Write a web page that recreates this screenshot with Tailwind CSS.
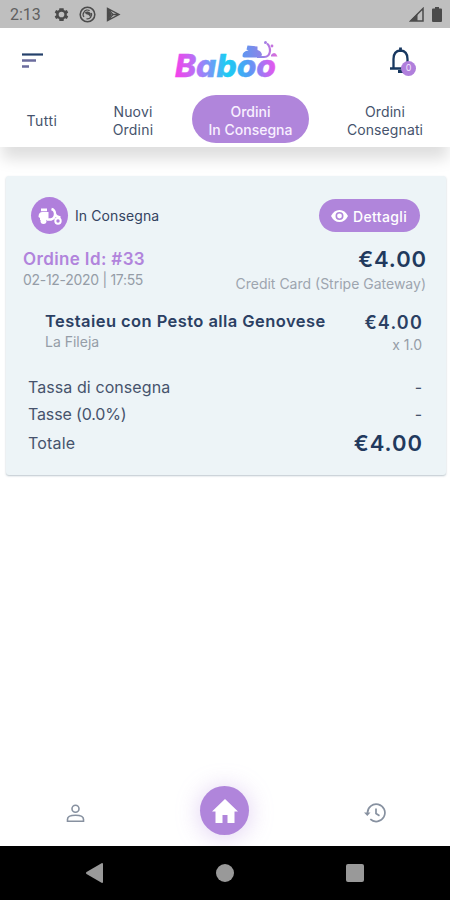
<!DOCTYPE html>
<html lang="it">
<head>
<meta charset="utf-8">
<meta name="viewport" content="width=device-width, initial-scale=1">
<title>Baboo - Ordini</title>
<script src="https://cdn.jsdelivr.net/npm/@tailwindcss/browser@4"></script>
</head>
<body class="bg-white">
<div class="w-[450px] h-[900px] overflow-hidden flex flex-col bg-white font-['Inter','Liberation_Sans',sans-serif] text-[#34435f] whitespace-nowrap">

  <!-- Status bar -->
  <div class="h-7 shrink-0 bg-[#bfbfbf] flex items-center text-[#4b4b4b] pl-[10px] pr-[8px] relative z-20">
    <span class="w-[43px] font-['Roboto',sans-serif] text-[16px] leading-none pt-px text-[#606060]">2:13</span>
    <svg class="size-[17px] mt-px" viewBox="0 0 24 24" fill="currentColor"><path fill-rule="evenodd" d="M19.4 13a7.500 7.500 0 0 0 0-2l2.100-1.700-2-3.500-2.500 1a7.500 7.500 0 0 0-1.700-1L15 3H9l-.4 2.800a7.500 7.500 0 0 0-1.700 1l-2.500-1-2 3.500L4.600 11a7.500 7.500 0 0 0 0 2l-2.200 1.700 2 3.500 2.500-1a7.500 7.500 0 0 0 1.700 1L9 21h6l.3-2.800a7.500 7.500 0 0 0 1.700-1l2.500 1 2-3.500zM12 16a4 4 0 1 1 0-8 4 4 0 0 1 0 8z"/></svg>
    <svg class="size-[17px] ml-[9px] mt-px" viewBox="0 0 24 24" fill="none" stroke="currentColor" stroke-width="2.200"><circle cx="12" cy="12" r="10.300"/><path d="M7 15.500a6 6 0 0 1 0-7 6 6 0 0 1 8-2M17.500 10a6 6 0 0 1-7 8" stroke-width="1.800"/><path d="M8.500 9q4-2 7.500 1v5q-1.500-3-4-3.500-2.500 0-3.500-2.500z" fill="currentColor" stroke-width="1"/></svg>
    <svg class="w-[15px] h-[15px] ml-[10px] mt-px" viewBox="0 0 15 15" fill="none" stroke="currentColor" stroke-width="1.400"><path d="M1.500 1.500v12L13 7.500zM2 2l5 5.500L2 13M7 7.500h6"/><path d="M2 3v9l3-4.500z" fill="currentColor"/></svg>
    <svg class="w-[15px] h-[15px] ml-auto mt-px" viewBox="0 0 15 15"><path d="M14 1.500v12.500H1.500z" fill="none" stroke="currentColor" stroke-width="1.500"/><path d="M8.500 6.500V14H1z" fill="currentColor"/></svg>
    <svg class="w-[10px] h-[15px] ml-[8px] mt-px" viewBox="0 0 10 15" fill="currentColor"><path d="M3 0h4v1.500h2q1 0 1 1V14q0 1-1 1H1q-1 0-1-1V2.500q0-1 1-1h2z"/></svg>
  </div>

  <!-- App header with filter tabs -->
  <header class="h-[119px] shrink-0 bg-white relative z-10 shadow-[0_14px_14px_-2px_rgba(0,0,0,0.13)] flex flex-col">
    <div class="h-[67px] flex items-center justify-between pl-[22px] pr-[31px]">
      <svg class="w-[21px] h-[15px] mt-[-2px]" viewBox="0 0 21 15"><path d="M0 1.500h21" stroke="#24406a" stroke-width="2.200"/><path d="M0 7.500h14M0 13.500h7" stroke="#6b6c9d" stroke-width="2.400"/></svg>
      <svg class="w-[110px] h-[50px] ml-[18px]" viewBox="0 0 110 50">
        <defs>
          <linearGradient id="brand" gradientUnits="userSpaceOnUse" x1="4" y1="40" x2="106" y2="30"><stop offset="0" stop-color="#f83fe9"/><stop offset=".25" stop-color="#a97bf9"/><stop offset=".52" stop-color="#19cef3"/><stop offset=".72" stop-color="#529cf5"/><stop offset=".88" stop-color="#b46ff3"/><stop offset="1" stop-color="#ef51ec"/></linearGradient>
          <linearGradient id="ride" gradientUnits="userSpaceOnUse" x1="72" y1="0" x2="106" y2="0"><stop offset="0" stop-color="#5f96f0"/><stop offset=".5" stop-color="#8a86e8"/><stop offset="1" stop-color="#dd6bdc"/></linearGradient>
        </defs>
        <text x="4" y="39.500" textLength="101" lengthAdjust="spacingAndGlyphs" font-family="Inter, sans-serif" font-weight="800" font-style="italic" font-size="31" fill="url(#brand)" stroke="url(#brand)" stroke-width=".4">Baboo</text>
        <path d="M71.500 19q0-5 6-5.500l-2-1 1-4 10 1v3.500q4 1 4.500 5l-2 2.500H75q-3.500 0-3.500-1.500zM100 18q4-4.500 6.500 1.500h-6.500z" fill="url(#ride)"/>
        <path d="M86 20h7q5.500 0 6-6 0-5-3-7.500" fill="none" stroke="url(#ride)" stroke-width="2.200"/>
        <circle cx="94.500" cy="5.500" r="1.500" fill="url(#ride)"/><circle cx="101" cy="9" r="1.400" fill="url(#ride)"/>
      </svg>
      <div class="relative w-[28px] h-[29px] mt-[-1px]">
        <svg class="w-[24px] h-[27px] ml-[-2px]" viewBox="0 0 24 27" fill="none" stroke="#183860" stroke-width="2.300"><path d="M1 21.500h21M4.500 21V12q0-8 7-8.500 7 .5 7 8.500v9"/><path d="M11.500 3.500V.5M9 24.500h5" stroke-width="2.800"/></svg>
        <span class="absolute left-[10px] top-[14px] size-[15px] rounded-full bg-[#b07fdc] text-[9px] leading-[14px] text-center text-[#f0e6fb]">0</span>
      </div>
    </div>
    <nav class="h-12 flex items-center text-center text-[14px] leading-[18px] text-[#46536c]">
      <div class="w-[84px] tracking-[.5px] pt-[3px]">Tutti</div>
      <div class="w-[98px] tracking-[.2px] pt-[3px]">Nuovi<br>Ordini</div>
      <div class="w-[117px] h-12 ml-[10px] rounded-full bg-[#b085db] text-[#f8f0ff] pt-[8px] font-medium">Ordini<br>In Consegna</div>
      <div class="w-[130px] ml-[11px] pt-[3px] tracking-[.1px]">Ordini<br>Consegnati</div>
    </nav>
  </header>

  <!-- Order card -->
  <main class="flex-1 pl-[6px] pr-[4px] pt-[29px]">
    <article class="h-[299px] rounded-[3px] bg-[#edf4f7] shadow-[0_1px_2px_rgba(60,90,110,0.35)] pt-[21px]">
      <div class="h-[37px] flex items-center pl-[25px] pr-[26px]">
        <div class="size-[37px] rounded-full bg-[#b07fdc] flex items-center justify-center">
          <svg class="w-[24px] h-[18px]" viewBox="0 0 24 18" fill="none"><path d="M3 1.500h6v2.800H3zM.5 10q0-5 4-5h6v6q0 2-2 2H2v-2z" fill="#fff"/><path d="M9 12.500h4q4-1 4-5.500 0-4-3.500-5M17 7q1 3 5.500 3.500" stroke="#fff" stroke-width="2.400"/><circle cx="5.500" cy="14" r="3" fill="#fff"/><circle cx="20" cy="14" r="2.700" stroke="#fff" stroke-width="2"/></svg>
        </div>
        <span class="ml-[7px] text-[14px] tracking-[.1px]">In Consegna</span>
        <button class="ml-auto w-[101px] h-[33px] rounded-full bg-[#b085db] text-white flex items-center pl-[12px] text-[14px] font-medium">
          <svg class="w-[17px] h-[12px] mr-[5px]" viewBox="0 0 17 12"><path fill="#fff" fill-rule="evenodd" d="M8.500 0Q14 0 17 6q-3 6-8.500 6T0 6q3-6 8.500-6zm0 2a4 4 0 1 0 0 8 4 4 0 0 0 0-8z"/><circle cx="8.500" cy="6" r="2.400" fill="#fff"/></svg>
          <span class="pt-px tracking-[.35px]">Dettagli</span>
        </button>
      </div>

      <div class="flex justify-between pl-[17px] pr-[20px] pt-[12px] h-[75px]">
        <div>
          <div class="h-[25px] leading-[26px] text-[17px] tracking-[.37px] font-semibold text-[#b184dc]">Ordine Id: #33</div>
          <div class="h-[18px] leading-[18px] text-[14px] tracking-[-.3px] text-[#959da7]">02-12-2020 | 17:55</div>
        </div>
        <div class="text-right">
          <div class="h-[26px] leading-[26px] text-[22px] tracking-[.9px] -mr-px font-semibold text-[#21395d]">€4.00</div>
          <div class="h-[24px] leading-[24px] text-[14px] text-[#9da5af]">Credit Card (Stripe Gateway)</div>
        </div>
      </div>

      <div class="flex justify-between pl-[39px] pr-[24px] h-[63px] pt-px">
        <div>
          <div class="h-[22px] leading-[22px] text-[16.500px] tracking-[.43px] font-semibold text-[#2b4063]">Testaieu con Pesto alla Genovese</div>
          <div class="h-[20px] leading-[20px] text-[14px] text-[#959da7]">La Fileja</div>
        </div>
        <div class="text-right">
          <div class="h-[24px] leading-[26px] text-[18px] tracking-[1.200px] -mr-px font-semibold text-[#2b4063]">€4.00</div>
          <div class="h-[22px] leading-[22px] text-[14px] text-[#959da7]">x 1.0</div>
        </div>
      </div>

      <div class="pl-[22px] pr-[24px] text-[16px] text-[#46536c]">
        <div class="flex justify-between h-[30px] leading-[30px]"><span class="tracking-[.08px]">Tassa di consegna</span><span>-</span></div>
        <div class="flex justify-between h-[25px] leading-[25px]"><span class="tracking-[-.15px]">Tasse (0.0%)</span><span>-</span></div>
        <div class="flex justify-between h-[32px] leading-[32px]"><span class="tracking-[.2px]">Totale</span><span class="text-[22px] tracking-[1px] -mr-px font-semibold text-[#21395d]">€4.00</span></div>
      </div>
    </article>
  </main>

  <!-- Bottom navigation -->
  <footer class="h-[60px] shrink-0 flex items-start justify-between pl-[66px] pr-[63px] relative">
    <svg class="size-[19px] mt-[18px]" viewBox="0 0 19 19" fill="none" stroke="#8791a0" stroke-width="1.600"><circle cx="9.500" cy="4.700" r="3.500"/><path d="M1.500 17.200v-2q0-4 8-4t8 4v2z"/></svg>
    <div class="size-[49px] rounded-full bg-[#b085db] shadow-[0_2px_24px_rgba(176,133,219,0.4)] flex items-center justify-center">
      <svg class="w-[26px] h-[24px]" viewBox="0 0 26 24" fill="#fff"><path d="M13 0l13 12.500h-3.500V24H15.500v-8h-5v8H3.500V12.500H0z"/></svg>
    </div>
    <svg class="w-[22px] h-[20px] mt-[17px] mr-px" viewBox="0 0 22 20" fill="none" stroke="#8791a0" stroke-width="1.700"><path d="M3.500 10a8.700 8.700 0 1 1 2.800 6.200"/><path d="M12 5.500v5l3.500 2.200"/><path d="M0 9.500h6.500l-3.200 3.500z" fill="#8791a0" stroke="none"/></svg>
  </footer>

  <!-- System navigation -->
  <div class="h-[54px] shrink-0 bg-black flex items-center justify-between pl-[86px] pr-[86px] relative">
    <svg class="w-[17px] h-[20px]" viewBox="0 0 17 20" fill="#999"><path d="M16 0q1 0 1 1v18q0 1-1 1L.5 11q-1-1 0-2z"/></svg>
    <span class="size-[18px] rounded-full bg-[#999]"></span>
    <span class="size-[18px] rounded-[2px] bg-[#999]"></span>
  </div>
</div>
</body>
</html>
